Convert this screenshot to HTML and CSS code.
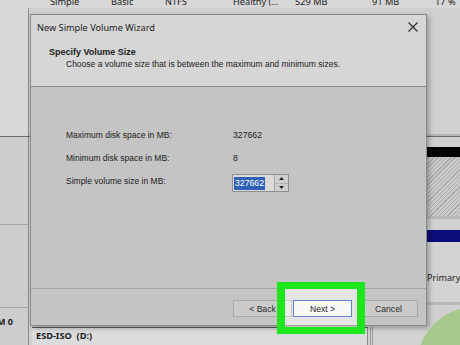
FILE: index.html
```html
<!DOCTYPE html>
<html lang="en">
<head>
    <meta charset="UTF-8">
    <title>New Simple Volume Wizard</title>
    <link rel="stylesheet" href="styles.css">
</head>
<body>

<!-- Disk Management window behind the wizard -->
<div class="mgmt">
    <div class="vol-row">
        <span>Simple</span>
        <span>Basic</span>
        <span>NTFS</span>
        <span>Healthy (...</span>
        <span>529 MB</span>
        <span>91 MB</span>
        <span>17 %</span>
    </div>

    <div class="disk disk-top">
        <div class="disk-label"></div>
        <div class="disk-map"></div>
    </div>

    <div class="disk disk-1">
        <div class="disk-label"></div>
        <div class="disk-map">
            <div class="part">
                <div class="part-head head-black"></div>
                <div class="part-body hatch"></div>
            </div>
        </div>
    </div>

    <div class="disk disk-2">
        <div class="disk-label"></div>
        <div class="disk-map">
            <div class="part part-main">
                <div class="part-head head-navy"></div>
                <div class="part-body"></div>
            </div>
            <div class="part part-side">
                <div class="part-head head-navy"></div>
                <div class="part-body"><span>Primary partition</span></div>
            </div>
        </div>
    </div>

    <div class="disk disk-3">
        <div class="disk-label"><b>CD-ROM 0</b></div>
        <div class="disk-map">
            <div class="cd-part"><b>ESD-ISO&nbsp;&nbsp;(D:)</b></div>
            <div class="cd-rest"></div>
        </div>
    </div>
</div>

<!-- Wizard dialog -->
<div class="wizard">
    <div class="wiz-top">
        <div class="wiz-title">
            <span>New Simple Volume Wizard</span>
            <svg class="close" width="10" height="10" viewBox="0 0 10 10">
                <path d="M0.5 0.5 L9.5 9.5 M9.5 0.5 L0.5 9.5" stroke="#2a2a2a" stroke-width="1.1" fill="none"/>
            </svg>
        </div>
        <div class="wiz-head">
            <div class="wiz-heading">Specify Volume Size</div>
            <div class="wiz-sub">Choose a volume size that is between the maximum and minimum sizes.</div>
        </div>
    </div>

    <div class="wiz-body">
        <div class="size-grid">
            <div class="size-label">Maximum disk space in MB:</div>
            <div class="size-value">327662</div>
            <div class="size-label">Minimum disk space in MB:</div>
            <div class="size-value">8</div>
            <div class="size-label">Simple volume size in MB:</div>
            <div class="spin">
                <div class="spin-input"><span class="selected">327662</span></div>
                <div class="spin-btns">
                    <div class="spin-btn">
                        <svg width="5" height="3" viewBox="0 0 5 3"><path d="M0 3 L2.5 0 L5 3 Z" fill="#222"/></svg>
                    </div>
                    <div class="spin-btn">
                        <svg width="5" height="3" viewBox="0 0 5 3"><path d="M0 0 L2.5 3 L5 0 Z" fill="#222"/></svg>
                    </div>
                </div>
            </div>
        </div>
    </div>

    <div class="wiz-foot">
        <button class="btn">&lt; Back</button>
        <button class="btn btn-default">Next &gt;</button>
        <button class="btn btn-cancel">Cancel</button>
    </div>
</div>

<!-- Tutorial highlight over the Next button -->
<div class="highlight"></div>
<div class="blob"></div>

</body>
</html>
```

FILE: styles.css
```css
/* Reset */
* {
    margin: 0;
    padding: 0;
    box-sizing: border-box;
}

body {
    width: 460px;
    height: 345px;
    overflow: hidden;
    position: relative;
    background: #d0d0d0;
    font-family: "Noto Sans", sans-serif;
    color: #1c1c1c;
}

/* Background window */
.mgmt {
    display: flex;
    flex-direction: column;
    height: 100%;
}

.vol-row {
    display: grid;
    grid-template-columns: 61px 54px 68px 62px 77px 63px 1fr;
    padding-left: 50px;
    height: 8px;
    font-size: 9.2px;
    line-height: 10px;
    background: #d7d7d7;
    overflow: hidden;
}

.vol-row span {
    margin-top: -3px;
    white-space: nowrap;
}

.disk {
    display: grid;
    grid-template-columns: 29px 1fr;
}

.disk-label {
    border-right: 1px solid #8c8c8c;
    border-bottom: 1px solid #a6a6a6;
    background: #cdcdcd;
}

.disk-top {
    height: 129px;
    border-bottom: 1px solid #6a6a6a;
}

.disk-top .disk-label {
    background: #d8d8d8;
    border-bottom: none;
}

.disk-top .disk-map {
    background: #d0d0d0;
    border-bottom: 2px solid #b4b4b4;
}

.disk-map {
    display: flex;
    gap: 2px;
    padding-left: 3px;
}

.disk-1 {
    height: 88px;
}

.disk-1 .disk-map {
    padding-top: 10px;
    padding-bottom: 6px;
}

.part {
    display: flex;
    flex-direction: column;
    flex: 1;
    border-bottom: 3px solid #b8b8b8;
}

.part-head {
    height: 10px;
}

.head-black {
    background: #050505;
}

.head-navy {
    height: 12px;
    background: #0c0c78;
}

.part-body {
    flex: 1;
    background: #d3d3d3;
    font-size: 9px;
    line-height: 11px;
    padding: 30px 0 0 2px;
    white-space: nowrap;
    overflow: hidden;
}

.hatch {
    background: repeating-linear-gradient(135deg, #cbcbcb 0 2px, #a9a9a9 2px 3px);
}

.disk-2 {
    height: 83px;
}

.disk-2 .disk-map {
    padding-top: 5px;
    padding-bottom: 3px;
}

.part-main {
    flex: 0 0 391px;
}

.part-side {
    flex: 0 0 60px;
}

.disk-3 {
    flex: 1;
}

.disk-3 .disk-label {
    border-bottom: none;
    display: flex;
    justify-content: flex-end;
    padding: 8px 15px 0 0;
    font-size: 9px;
    line-height: 12px;
    white-space: nowrap;
    overflow: hidden;
}

.disk-3 .disk-map {
    padding-top: 19px;
    gap: 0;
}

.cd-part {
    flex: 0 0 336px;
    background: #dcdcdc;
    border-top: 1px solid #5c5c5c;
    border-right: 1px solid #8a8a8a;
    font-size: 9.2px;
    line-height: 14px;
    padding: 1px 0 0 4px;
}

.cd-rest {
    flex: 1;
    border-left: 3px double #9a9a9a;
    margin-left: 2px;
    background: #d2d2d2;
}

/* Wizard dialog */
.wizard {
    position: absolute;
    left: 30px;
    top: 14px;
    width: 397px;
    height: 312px;
    border: 1px solid #8a8a8a;
    box-shadow: 2px 2px 5px rgba(0, 0, 0, 0.3);
    background: #c4c4c4;
    display: flex;
    flex-direction: column;
}

.wiz-top {
    height: 72px;
    background: #d6d6d6;
    border-bottom: 1px solid #8a8a8a;
}

.wiz-title {
    height: 24px;
    display: flex;
    align-items: center;
    justify-content: space-between;
    padding: 0 8px 0 6px;
    font-size: 9.2px;
}

.wiz-head {
    padding: 7px 0 0 18px;
    font-family: "Liberation Sans", Arial, sans-serif;
    line-height: 12px;
}

.wiz-heading {
    font-size: 9px;
    font-weight: bold;
}

.wiz-sub {
    font-size: 8.5px;
    padding-left: 17px;
}

.wiz-body {
    flex: 1;
    padding: 36px 0 0 35px;
    font-family: "Liberation Sans", Arial, sans-serif;
    font-size: 8.5px;
}

.size-grid {
    display: grid;
    grid-template-columns: 167px auto;
    grid-auto-rows: 23px;
    align-items: center;
}

.size-value {
    font-size: 8.7px;
}

.spin {
    display: flex;
    align-self: end;
    width: 57px;
    height: 18px;
    margin-left: -1px;
    border: 1px solid #8f8f8f;
    background: #dadada;
}

.spin-input {
    flex: 1;
    display: flex;
    align-items: center;
    padding-left: 1px;
    font-size: 8.7px;
}

.selected {
    background: #2f62b5;
    color: #fff;
    padding: 1px 1px;
    line-height: 11px;
}

.spin-btns {
    width: 14px;
    display: flex;
    flex-direction: column;
    border-left: 1px solid #a8a8a8;
}

.spin-btn {
    flex: 1;
    display: flex;
    align-items: center;
    justify-content: center;
    background: #cfcfcf;
}

.spin-btn + .spin-btn {
    border-top: 1px solid #b5b5b5;
}

.wiz-foot {
    height: 37px;
    border-top: 1px solid #a5a5a5;
    display: flex;
    justify-content: flex-end;
    align-items: flex-start;
    padding: 11px 8px 0 0;
}

.btn {
    width: 59px;
    height: 17px;
    border: 1px solid #a9a9a9;
    background: #cbcbcb;
    font-family: "Liberation Sans", Arial, sans-serif;
    font-size: 8.6px;
    color: #2a2a2a;
}

.btn-default {
    margin-left: 1px;
    border-color: #4f71b3;
    background: #d4d4d4;
    color: #1a1a1a;
}

.btn-cancel {
    margin-left: 7px;
}

/* Overlays */
.highlight {
    position: absolute;
    left: 277px;
    top: 282px;
    width: 88px;
    height: 52px;
    border: 7px solid #1ce61c;
    border-left-width: 8px;
    border-right-width: 8px;
    backdrop-filter: brightness(1.17);
}

.blob {
    position: absolute;
    left: 417px;
    top: 307px;
    width: 116px;
    height: 116px;
    border-radius: 50%;
    background: #a7c98d;
}
```
